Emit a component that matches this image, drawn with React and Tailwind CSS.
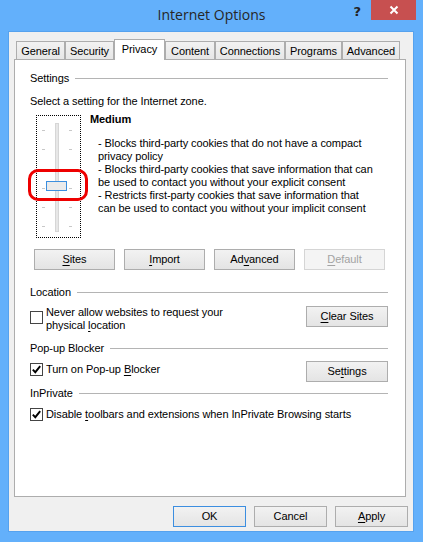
import React from 'react';

const tabs = [
    { label: 'General', w: 'w-[49px]' },
    { label: 'Security', w: 'w-[49px]' },
    { label: 'Privacy', w: 'w-[51px]', active: true },
    { label: 'Content', w: 'w-[50px]' },
    { label: 'Connections', w: 'w-[70px]' },
    { label: 'Programs', w: 'w-[57px]' },
    { label: 'Advanced', w: 'w-[58px]' },
];

function Key({ children }) {
    return <span className="underline underline-offset-[2px]">{children}</span>;
}

function Button({ children, className = '', disabled = false, primary = false }) {
    const border = primary ? 'border-[#3c8ee0]' : disabled ? 'border-[#d5d5d5]' : 'border-[#adadad]';
    const fill = disabled ? 'bg-[#f4f4f4] text-[#a3a3a3]' : 'bg-linear-to-b from-[#f2f2f2] to-[#e4e4e4] text-black';
    return (
        <div className={`h-[21px] flex items-center justify-center border ${border} ${fill} ${className}`}>
            {children}
        </div>
    );
}

function Checkbox({ checked }) {
    return (
        <div className="w-[13px] h-[13px] shrink-0 border border-[#444] bg-white flex items-center justify-center">
            {checked && (
                <svg width="11" height="11" viewBox="0 0 11 11">
                    <path d="M1.8 5.6 L4.3 8.2 L9.2 2.2" fill="none" stroke="#000" strokeWidth="1.9" />
                </svg>
            )}
        </div>
    );
}

function GroupHeader({ title }) {
    return (
        <div className="flex items-center h-[13px]">
            <span className="whitespace-nowrap">{title}</span>
            <div className="flex-1 h-px bg-[#b4b4b4] ml-[6px]" />
        </div>
    );
}

function PrivacySlider() {
    const ticks = [14, 33, 53, 72, 91, 110];
    return (
        <div className="relative ml-[6px] w-[45px] h-[123px] shrink-0 border border-dotted border-black">
            <svg width="43" height="121" viewBox="0 0 43 121" className="block">
                {ticks.map((y) => (
                    <g key={y}>
                        <rect x="5" y={y} width="3" height="1" fill="#c8c8c8" />
                        <rect x="32" y={y} width="3" height="1" fill="#c8c8c8" />
                    </g>
                ))}
                <rect x="18.5" y="7.5" width="3" height="108" fill="#e7e7e7" stroke="#d6d6d6" />
                <rect x="9.5" y="65.5" width="20" height="9" fill="#ebebeb" stroke="#3c8fdf" />
            </svg>
            {/* highlight drawn over the slider thumb */}
            <div className="absolute left-[-9px] top-[53px] w-[60px] h-[32px] rounded-[10px] border-[3px] border-[#ee0000]" />
        </div>
    );
}

export default function App() {
    return (
        <div className="w-[423px] h-[542px] bg-[#63b0fb] flex flex-col font-['Liberation_Sans',Arial,sans-serif] text-[11px] leading-[13px] tracking-[-0.08px] text-black">
            {/* Title bar */}
            <div className="h-[31px] shrink-0 grid grid-cols-[1fr_auto_1fr]">
                <div />
                <div className="pt-[6px] font-['Open_Sans','Noto_Sans',sans-serif] text-[14px] leading-[18px] tracking-normal text-[#262626]">
                    Internet Options
                </div>
                <div className="flex justify-end items-start pr-[7px]">
                    <span className="mt-[5px] mr-[10px] font-['DejaVu_Sans',sans-serif] font-bold text-[13px] leading-[14px] text-[#222]">?</span>
                    <div className="w-[45px] h-[20px] bg-[#c75050] flex items-center justify-center">
                        <svg width="10" height="10" viewBox="0 0 10 10">
                            <path d="M1.5 1.5 L8.5 8.5 M8.5 1.5 L1.5 8.5" stroke="#fff" strokeWidth="2" />
                        </svg>
                    </div>
                </div>
            </div>

            {/* Client area */}
            <div className="flex-1 ml-[8px] mr-[9px] mb-[10px] bg-[#f0f0f0] border border-[#56a2ee] pt-[6px] pl-[5px] pr-[7px] flex flex-col">
                <div className="flex items-end h-[21px] pl-[2px]">
                    {tabs.map((t) =>
                        t.active ? (
                            <div
                                key={t.label}
                                className={`${t.w} h-[21px] -mb-px relative z-10 bg-white border border-b-0 border-[#adadad] flex items-center justify-center pb-[1px]`}
                            >
                                {t.label}
                            </div>
                        ) : (
                            <div
                                key={t.label}
                                className={`${t.w} h-[18px] bg-linear-to-b from-[#f2f2f2] to-[#e6e6e6] border border-b-0 border-[#adadad] flex items-center justify-center pt-[1px]`}
                            >
                                {t.label}
                            </div>
                        )
                    )}
                </div>

                {/* Tab panel */}
                <div className="h-[438px] bg-white border border-[#adadad] pl-[15px] pr-[17px] pt-[12px] flex flex-col">
                    <GroupHeader title="Settings" />
                    <div className="mt-[10px]">Select a setting for the Internet zone.</div>

                    <div className="mt-[7px] flex">
                        <PrivacySlider />
                        <div className="ml-[9px] -mt-[2px] whitespace-nowrap">
                            <div className="font-bold">Medium</div>
                            <div className="mt-[11px] pl-[8px]">
                                - Blocks third-party cookies that do not have a compact<br />
                                privacy policy<br />
                                - Blocks third-party cookies that save information that can<br />
                                be used to contact you without your explicit consent<br />
                                - Restricts first-party cookies that save information that<br />
                                can be used to contact you without your implicit consent
                            </div>
                        </div>
                    </div>

                    <div className="mt-[11px] ml-[4px] flex gap-[9px]">
                        <Button className="w-[81px]"><Key>S</Key>ites</Button>
                        <Button className="w-[81px]"><Key>I</Key>mport</Button>
                        <Button className="w-[81px]">Ad<Key>v</Key>anced</Button>
                        <Button className="w-[81px]" disabled><Key>D</Key>efault</Button>
                    </div>

                    <div className="mt-[16px]">
                        <GroupHeader title="Location" />
                    </div>
                    <div className="mt-[7px] flex justify-between items-start">
                        <div className="flex items-start">
                            <div className="mt-[5px]"><Checkbox /></div>
                            <div className="ml-[3px]">
                                Never allow websites to request your<br />
                                physical <Key>l</Key>ocation
                            </div>
                        </div>
                        <Button className="w-[82px]"><Key>C</Key>lear Sites</Button>
                    </div>

                    <div className="mt-[10px]">
                        <GroupHeader title="Pop-up Blocker" />
                    </div>
                    <div className="mt-[6px] flex justify-between items-start">
                        <div className="flex items-start mt-[2px]">
                            <Checkbox checked />
                            <div className="ml-[3px]">Turn on Pop-up <Key>B</Key>locker</div>
                        </div>
                        <Button className="w-[82px]">Se<Key>t</Key>tings</Button>
                    </div>

                    <div className="mt-[5px]">
                        <GroupHeader title="InPrivate" />
                    </div>
                    <div className="mt-[8px] flex items-center">
                        <Checkbox checked />
                        <div className="ml-[3px]">Disable <Key>t</Key>oolbars and extensions when InPrivate Browsing starts</div>
                    </div>
                </div>

                <div className="mt-[9px] -mr-[2px] flex justify-end gap-[8px]">
                    <Button className="w-[73px]" primary>OK</Button>
                    <Button className="w-[73px]">Cancel</Button>
                    <Button className="w-[73px]"><Key>A</Key>pply</Button>
                </div>
            </div>
        </div>
    );
}
